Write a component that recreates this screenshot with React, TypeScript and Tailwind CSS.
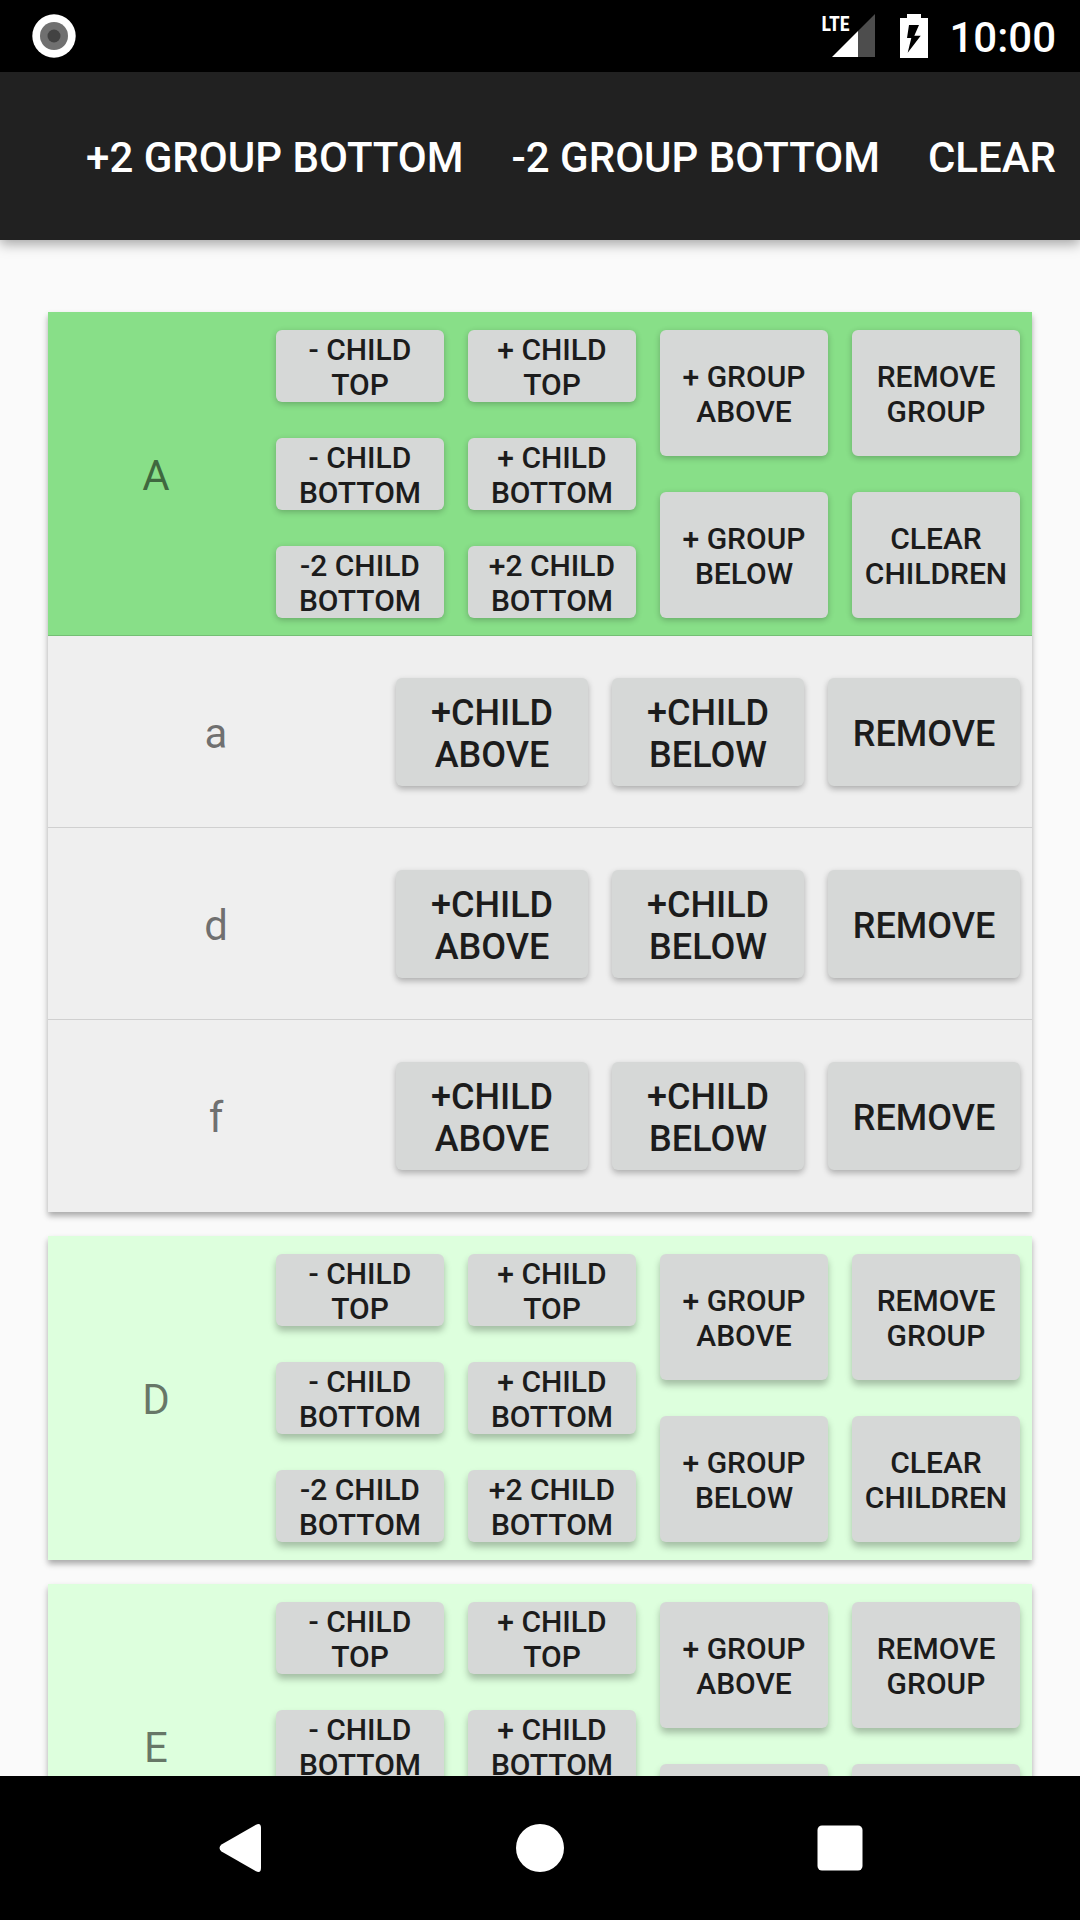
import React from "react";

type Item = { name: string; children: string[]; expanded?: boolean };

const items: Item[] = [
  { name: "A", children: ["a", "d", "f"], expanded: true },
  { name: "D", children: [] },
  { name: "E", children: [] },
];

const toolbarActions = ["+2 Group bottom", "-2 Group bottom", "Clear"];

const childEndActions = [
  ["- Child top", "- Child bottom", "-2 Child bottom"],
  ["+ Child top", "+ Child bottom", "+2 Child bottom"],
];

const groupActions = [
  ["+ Group above", "+ Group below"],
  ["Remove group", "Clear children"],
];

const lowShadow = "shadow-[0_2px_6px_rgba(0,0,0,0.24)]";
const midShadow = "shadow-[0_3px_6px_rgba(0,0,0,0.28)]";
const highShadow = "shadow-[0_5px_7px_rgba(0,0,0,0.26)]";

function GroupButton({ label, shadow }: { label: string; shadow: string }) {
  return (
    <button
      type="button"
      className={`flex min-h-[72px] flex-1 items-center justify-center rounded-md bg-[#d6d8d7] px-3 pt-0.5 text-center text-[30px] leading-[35px] font-medium text-[#1c1c1c] uppercase ${shadow}`}
    >
      {label}
    </button>
  );
}

function GroupHeader({ item }: { item: Item }) {
  const tone = item.expanded
    ? "bg-[#88df88] shadow-[inset_0_-1px_#74be74]"
    : "bg-[#ddffdd]";
  const shadow = item.expanded ? lowShadow : highShadow;
  return (
    <div className={`grid grid-cols-[9fr_8fr_8fr_8fr_8fr] py-[18px] ${tone}`}>
      <h2 className="flex items-center justify-center pt-1 text-[42px] leading-[50px] font-normal text-black/54">
        {item.name}
      </h2>
      {[...childEndActions, ...groupActions].map((column) => (
        <div key={column[0]} className="flex min-h-[288px] flex-col gap-9 px-3">
          {column.map((label) => (
            <GroupButton key={label} label={label} shadow={shadow} />
          ))}
        </div>
      ))}
    </div>
  );
}

function ChildRow({ name, last }: { name: string; last: boolean }) {
  return (
    <div
      className={`grid grid-cols-[14fr_9fr_9fr_9fr] items-center bg-[#efefef] py-[42px] ${
        last ? "" : "shadow-[inset_0_-1px_#d0d0d0]"
      }`}
    >
      <span className="pt-1 text-center text-[42px] leading-[50px] text-black/54">{name}</span>
      {["+Child above", "+Child below", "Remove"].map((label) => (
        <div key={label} className="flex px-3">
          <button
            type="button"
            className={`min-h-[108px] flex-1 rounded-md bg-[#d6d8d7] px-6 pt-1 text-center text-[36px] leading-[42px] font-medium text-[#1c1c1c] uppercase ${midShadow}`}
          >
            {label}
          </button>
        </div>
      ))}
    </div>
  );
}

function StatusBar() {
  return (
    <div className="flex h-[72px] shrink-0 items-center justify-between bg-black px-6 text-white">
      <svg viewBox="0 0 60 44" className="h-11 w-[60px]" aria-hidden="true">
        <circle cx="30" cy="22" r="21.7" fill="#fff" />
        <circle cx="30" cy="22" r="14" fill="#707070" />
        <circle cx="30" cy="22" r="6.5" fill="#424242" />
      </svg>
      <div className="flex items-center">
        <div className="relative mr-6 h-11 w-[54px]">
          <svg viewBox="0 0 54 44" className="h-11 w-[54px]" aria-hidden="true">
            <path d="M54 0V43H37V17Z" fill="#4d4d4d" />
            <path d="M11 43L37 17V43Z" fill="#fff" />
          </svg>
          <span className="absolute top-0 left-0 font-['Roboto_Condensed','Liberation_Sans_Narrow',Roboto,sans-serif] text-[20px] leading-[20px] font-bold">
            LTE
          </span>
        </div>
        <svg viewBox="0 0 30 44" className="mr-5 h-11 w-[30px]" aria-hidden="true">
          <path d="M8 0H22V4H29V44H1V4H8Z" fill="#fff" />
          <path d="M10 11H20L15.3 21.7H21.7L8.7 38.7L12.3 24H8Z" fill="#000" />
        </svg>
        <span className="pt-1 text-[42px] leading-[50px] font-medium">10:00</span>
      </div>
    </div>
  );
}

function NavBar() {
  const button = "flex flex-1 items-center justify-center";
  return (
    <nav className="flex h-36 shrink-0 justify-center bg-black px-[90px]">
      <button type="button" aria-label="Back" className={button}>
        <svg viewBox="0 0 42 48" className="h-12 w-[42px]" fill="#fff">
          <path d="M37 .7Q42-1.5 42 4V44Q42 49.500 37 47.300L2.500 27.500Q-1.500 24 2.500 20.500Z" />
        </svg>
      </button>
      <button type="button" aria-label="Home" className={button}>
        <svg viewBox="0 0 48 48" className="size-12" fill="#fff">
          <circle cx="24" cy="24" r="24" />
        </svg>
      </button>
      <button type="button" aria-label="Recent apps" className={button}>
        <svg viewBox="0 0 46 46" className="size-[46px]" fill="#fff">
          <rect x="0.500" y="0.500" width="45" height="45" rx="4.500" />
        </svg>
      </button>
    </nav>
  );
}

export default function App() {
  return (
    <div className="flex h-screen flex-col bg-[#fafafa] font-[Roboto,sans-serif]">
      <StatusBar />
      <header className="z-10 flex h-[168px] shrink-0 items-center justify-end gap-12 bg-[#212121] px-6 pt-1 shadow-[0_4px_12px_rgba(0,0,0,0.35)]">
        {toolbarActions.map((label) => (
          <button
            key={label}
            type="button"
            className="text-[42px] leading-[50px] font-medium whitespace-nowrap text-white uppercase"
          >
            {label}
          </button>
        ))}
      </header>
      <main className="flex min-h-0 flex-1 flex-col gap-6 overflow-y-auto px-12 pt-[72px] [scrollbar-width:none]">
        {items.map((item) => (
          <section key={item.name} className="shadow-[0_4px_6px_rgba(0,0,0,0.32)]">
            <GroupHeader item={item} />
            {item.children.map((child, i) => (
              <ChildRow key={child} name={child} last={i === item.children.length - 1} />
            ))}
          </section>
        ))}
      </main>
      <NavBar />
    </div>
  );
}
